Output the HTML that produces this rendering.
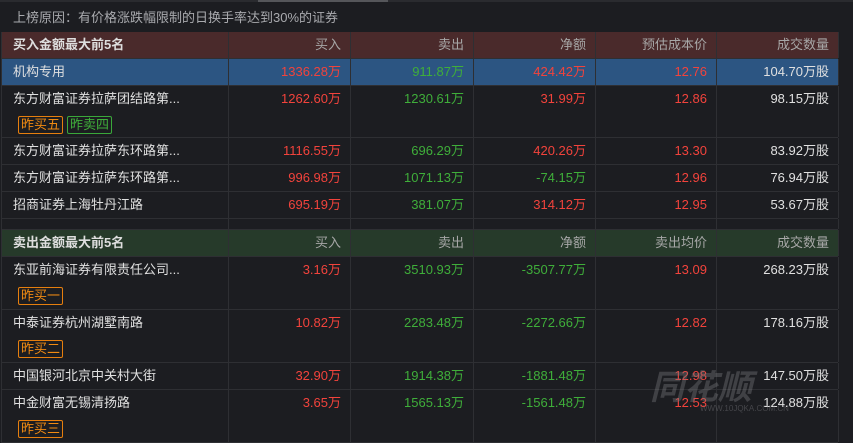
<!DOCTYPE html>
<html><head><meta charset="utf-8"><style>
*{margin:0;padding:0;box-sizing:border-box}
body{width:853px;height:438px;overflow:hidden;background:#1c1d21;font-family:"Liberation Sans","Noto Sans CJK SC",sans-serif;font-size:13px;color:#d8d8d8;position:relative}
.top{position:absolute;left:0;top:0;width:853px;height:2px;background:#2a2b2f}
.top i{position:absolute;left:258px;width:130px;height:2px;background:#55565a}
.title{position:absolute;left:13px;top:7px;color:#a9aaae;font-size:13px}
.row{position:absolute;left:1px;width:837px;border-bottom:1px solid #2e2f33;border-left:1px solid #2e2f33}
.c{position:absolute;top:0;line-height:26px;border-right:1px solid #2e2f33;text-align:right;padding-right:9px;white-space:nowrap}
.row .c{height:100%}
.c0{left:0;width:227px;text-align:left;padding-left:11px}
.c1{left:227px;width:122px}.c2{left:349px;width:123px}.c3{left:472px;width:122px}.c4{left:594px;width:121px}.c5{left:715px;width:122px}
.hb{background:#4a2a2b;color:#a7a7a7}.hs{background:#263a2a;color:#a7a7a7}
.hb .c0,.hs .c0{font-weight:bold;color:#dedede}
.blue{background:#2c5582}
.r{color:#f2433c}.g{color:#3fae3a}.w{color:#e0e0e0}
.tag{position:absolute;left:16px;height:18px;line-height:16px;border:1px solid #e67f0e;color:#f08a12;font-size:13px;padding:0 2px;border-radius:2px}
.tag.gr{border-color:#3aa83a;color:#3fae3a}
.wm{position:absolute;left:650px;top:360px;color:rgba(120,120,125,.4);font-size:34px;font-style:italic;font-weight:bold}
.wm2{position:absolute;left:700px;top:404px;color:rgba(120,120,125,.45);font-size:8px}
</style></head><body>
<div class="top"><i></i></div>
<div class="title">上榜原因：有价格涨跌幅限制的日换手率达到30%的证券</div>

<div class="row hb" style="top:32px;height:27px"><div class="c c0">买入金额最大前5名</div><div class="c c1">买入</div><div class="c c2">卖出</div><div class="c c3">净额</div><div class="c c4">预估成本价</div><div class="c c5">成交数量</div></div>
<div class="row blue" style="top:59px;height:27px"><div class="c c0 w">机构专用</div><div class="c c1 r">1336.28万</div><div class="c c2 g">911.87万</div><div class="c c3 r">424.42万</div><div class="c c4 r">12.76</div><div class="c c5 w">104.70万股</div></div>
<div class="row" style="top:86px;height:52px"><div class="c c0 w">东方财富证券拉萨团结路第...</div><div class="c c1 r">1262.60万</div><div class="c c2 g">1230.61万</div><div class="c c3 r">31.99万</div><div class="c c4 r">12.86</div><div class="c c5 w">98.15万股</div>
<span class="tag" style="top:30px">昨买五</span><span class="tag gr" style="top:30px;left:65px">昨卖四</span></div>
<div class="row" style="top:138px;height:27px"><div class="c c0 w">东方财富证券拉萨东环路第...</div><div class="c c1 r">1116.55万</div><div class="c c2 g">696.29万</div><div class="c c3 r">420.26万</div><div class="c c4 r">13.30</div><div class="c c5 w">83.92万股</div></div>
<div class="row" style="top:165px;height:27px"><div class="c c0 w">东方财富证券拉萨东环路第...</div><div class="c c1 r">996.98万</div><div class="c c2 g">1071.13万</div><div class="c c3 g">-74.15万</div><div class="c c4 r">12.96</div><div class="c c5 w">76.94万股</div></div>
<div class="row" style="top:192px;height:27px"><div class="c c0 w">招商证券上海牡丹江路</div><div class="c c1 r">695.19万</div><div class="c c2 g">381.07万</div><div class="c c3 r">314.12万</div><div class="c c4 r">12.95</div><div class="c c5 w">53.67万股</div></div>
<div class="row" style="top:219px;height:11px"><div class="c c0"></div><div class="c c1"></div><div class="c c2"></div><div class="c c3"></div><div class="c c4"></div><div class="c c5"></div></div>

<div class="row hs" style="top:230px;height:27px"><div class="c c0">卖出金额最大前5名</div><div class="c c1">买入</div><div class="c c2">卖出</div><div class="c c3">净额</div><div class="c c4">卖出均价</div><div class="c c5">成交数量</div></div>
<div class="row" style="top:257px;height:53px"><div class="c c0 w">东亚前海证券有限责任公司...</div><div class="c c1 r">3.16万</div><div class="c c2 g">3510.93万</div><div class="c c3 g">-3507.77万</div><div class="c c4 r">13.09</div><div class="c c5 w">268.23万股</div><span class="tag" style="top:30px">昨买一</span></div>
<div class="row" style="top:310px;height:53px"><div class="c c0 w">中泰证券杭州湖墅南路</div><div class="c c1 r">10.82万</div><div class="c c2 g">2283.48万</div><div class="c c3 g">-2272.66万</div><div class="c c4 r">12.82</div><div class="c c5 w">178.16万股</div><span class="tag" style="top:30px">昨买二</span></div>
<div class="row" style="top:363px;height:27px"><div class="c c0 w">中国银河北京中关村大街</div><div class="c c1 r">32.90万</div><div class="c c2 g">1914.38万</div><div class="c c3 g">-1881.48万</div><div class="c c4 r">12.98</div><div class="c c5 w">147.50万股</div></div>
<div class="row" style="top:390px;height:53px"><div class="c c0 w">中金财富无锡清扬路</div><div class="c c1 r">3.65万</div><div class="c c2 g">1565.13万</div><div class="c c3 g">-1561.48万</div><div class="c c4 r">12.53</div><div class="c c5 w">124.88万股</div><span class="tag" style="top:30px">昨买三</span></div>
<div class="wm">同花顺</div><div class="wm2">WWW.10JQKA.COM.CN</div>
</body></html>
